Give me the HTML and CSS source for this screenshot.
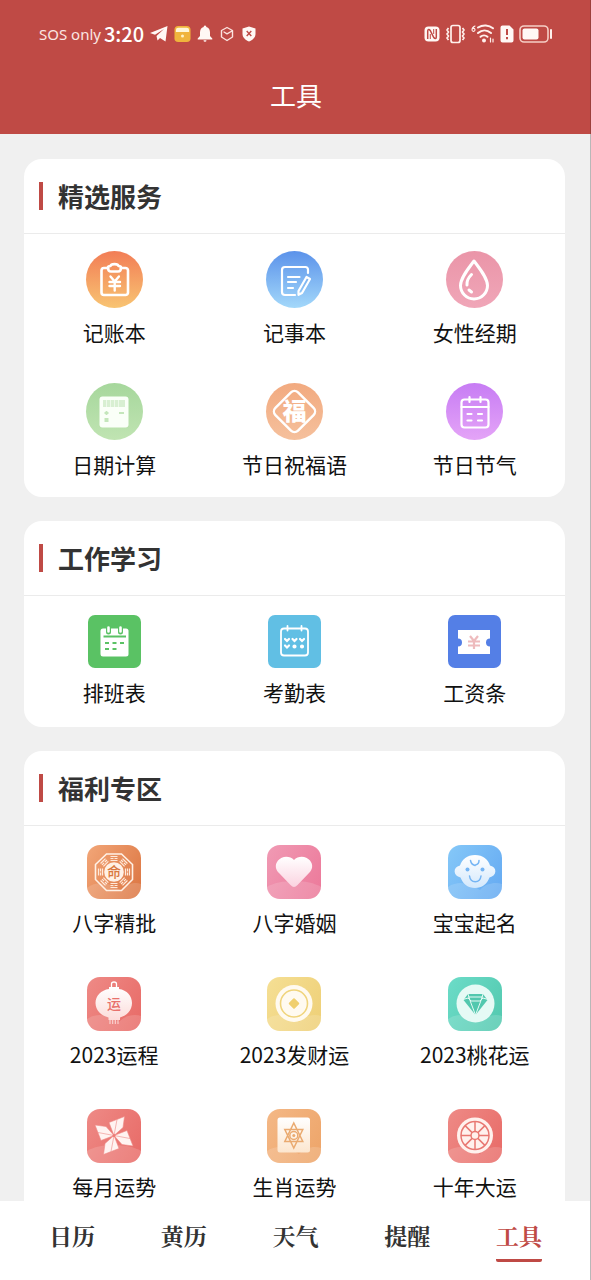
FILE: index.html
```html
<!DOCTYPE html>
<html lang="zh-CN">
<head>
<meta charset="utf-8">
<meta name="viewport" content="width=device-width, initial-scale=1">
<title>工具</title>
<link rel="stylesheet" href="styles.css">
</head>
<body>
<div class="app">
  <header class="header">
    <div class="status">
      <div class="status-left">
        <span class="carrier">SOS only</span>
        <span class="clock">3:20</span>
        <svg width="18" height="18" viewBox="0 0 18 18"><path fill="#fff8f5" d="M0 8 17.500 1 15.500 16.500 10 13 7.500 15.500 6.500 11 14 4 5 9.800Z"/></svg>
        <svg width="17" height="18" viewBox="0 0 18 18"><rect x="0.500" y="0.500" width="17" height="17" rx="4" fill="#f0b43c"/><path d="M2 7V5a2.500 2.500 0 0 1 2.500-2.500h9A2.500 2.500 0 0 1 16 5v2Z" fill="#fff6d8"/><circle cx="9" cy="11" r="1.600" fill="#fff3c8"/></svg>
        <svg width="16" height="18" viewBox="0 0 16 18"><path fill="#fff8f5" d="M8 .5a1.300 1.300 0 0 1 1.300 1.500C12 2.600 13 5 13 7.500V11l2.300 2.500v1H.7v-1L3 11V7.500C3 5 4 2.600 6.700 2A1.300 1.300 0 0 1 8 .5ZM6.500 15.300h3a1.500 1.500 0 0 1-3 0Z"/></svg>
        <svg width="17" height="16" viewBox="-1 0 17 16" fill="none" stroke="#fbe3df" stroke-width="1.400" stroke-linejoin="round" stroke-linecap="round"><path d="M7 1.500 12.500 4.500V11L7 14.500 1.500 11V4.500ZM4 6l3 1.800L12 5"/></svg>
        <svg width="14" height="16" viewBox="0 0 14 16"><path fill="#fff8f5" d="M7 .5 13.500 2.500V8c0 3.500-3 6-6.500 7.500C3.500 14 .5 11.500.5 8V2.500Z"/><path d="m4.700 5 4.600 5m0-5-4.600 5" stroke="#bf4a45" stroke-width="1.400"/></svg>
      </div>
      <div class="status-right">
        <svg width="16" height="18" viewBox="0 0 16 18"><rect x="0.500" y="1.500" width="15" height="15" rx="4" fill="#fff8f5"/><path d="M3.700 14V6c0-2 1.500-2 2.500-.5l3.600 7c1 1.500 2.500 1.500 2.500-.5V4" fill="none" stroke="#bf4a45" stroke-width="1.500"/><path d="M6.300 14V9M9.700 4v5" fill="none" stroke="#bf4a45" stroke-width="1"/></svg>
        <svg width="21" height="20" viewBox="0 0 21 20" fill="none" stroke="#fff0ec" stroke-width="1.700" stroke-linejoin="round"><rect x="6" y="1.500" width="9" height="17" rx="2"/><path d="m3.500 4-1.500 2 1.500 2L2 10l1.500 2L2 14l1.500 2M17.500 4 19 6l-1.500 2 1.500 2-1.500 2 1.500 2-1.500 2"/></svg>
        <svg width="24" height="20" viewBox="0 0 24 20" fill="none" stroke="#fff0ec" stroke-width="2" stroke-linecap="round"><path d="M7 3.500c5-3.200 11-2.600 15 .8M7 9c4-3.500 9-3.500 13 0M9.500 12.800c2-1.800 5-1.800 7 0"/><circle cx="13" cy="16.500" r="1" fill="#fff"/><path d="M19.500 14v4M22 15v3" stroke-width="1.200"/><path d="M4 2C1.500 3 1 4.500 1 6a1.500 1.500 0 1 0 .5-1.300" stroke-width="1.100"/></svg>
        <svg width="14" height="18" viewBox="0 0 14 18"><path fill="#fff8f5" d="M2.500.5h7l4 4v11a2 2 0 0 1-2 2h-9a2 2 0 0 1-2-2v-13a2 2 0 0 1 2-2Z"/><path d="M7 4v6m0 2v2.200" stroke="#bf4a45" stroke-width="2"/></svg>
        <svg width="34" height="18" viewBox="0 0 34 18"><rect x="1" y="1" width="28" height="16" rx="4" fill="none" stroke="#f6cfc6" stroke-width="1.600"/><rect x="3.500" y="3.500" width="16" height="11" rx="2" fill="#fff8f5"/><path d="M32 5v8" stroke="#fff0ec" stroke-width="2" stroke-linecap="round"/></svg>
      </div>
    </div>
    <h1 class="title">工具</h1>
  </header>

  <main class="content">
    <section class="card">
      <h2 class="card-title">精选服务</h2>
      <div class="grid">
        <a class="tool" href="#ledger">
          <span class="slot"><svg class="icon round ledger" viewBox="0 0 57 57" fill="none" stroke="#fff" stroke-width="2.600" stroke-linejoin="round" stroke-linecap="round"><path d="M22 17h-4a2.500 2.500 0 0 0-2.500 2.500v22A2.500 2.500 0 0 0 18 44h21.500a2.500 2.500 0 0 0 2.500-2.500v-22a2.500 2.500 0 0 0-2.500-2.500H35"/><path d="M22 16.500c0-1 1-1.500 2.500-1.500.5-2.500 7.500-2.500 8 0 1.500 0 2.500.5 2.500 1.500 0 2-1 4-3 4h-7c-2 0-3-2-3-4Z"/><path d="m24.500 25.500 4.200 5 4.200-5M23.500 31h10.500M23.500 35h10.500M28.700 31v8.500" stroke-width="2.400"/></svg></span>
          <span class="label">记账本</span>
        </a>
        <a class="tool" href="#notes">
          <span class="slot"><svg class="icon round notes" viewBox="0 0 57 57" fill="none" stroke="#fff" stroke-width="2.200" stroke-linejoin="round" stroke-linecap="round"><path d="M42 22v-3.500a2.500 2.500 0 0 0-2.500-2.500H19a3 3 0 0 0-3 3v22a3 3 0 0 0 3 3h10"/><path d="M22 26h11.500M22 31h8M22 37h5"/><path d="m40.500 26 3.500 2-8 14-3.500 1.800V40Z"/></svg></span>
          <span class="label">记事本</span>
        </a>
        <a class="tool" href="#period">
          <span class="slot"><svg class="icon round period" viewBox="0 0 57 57" fill="none" stroke="#fff" stroke-width="3" stroke-linejoin="round" stroke-linecap="round"><path d="M28 10C22 18 14.500 27 14.500 34.500a13.500 13.500 0 0 0 27 0C41.500 27 34 18 28 10Z"/><path d="M25.500 23.500c-3 3-5 6.500-4.500 10.500M23 39l2.500 2"/></svg></span>
          <span class="label">女性经期</span>
        </a>
        <a class="tool" href="#date">
          <span class="slot"><svg class="icon round date" viewBox="0 0 57 57"><rect x="13.500" y="13.500" width="29" height="31" rx="3" fill="#fafff8"/><path d="M17 17h22v7H17Z" fill="#d8efd2"/><path d="M20.500 17v7M24.500 17v7M28.500 17v7M32.500 17v7" stroke="#edf9ea" stroke-width="1"/><path d="M18.500 30h4m-2-2v4M33 30h5M18.500 36h4m-4 2h4" stroke="#c4e6bb" stroke-width="1.800"/></svg></span>
          <span class="label">日期计算</span>
        </a>
        <a class="tool" href="#greeting">
          <span class="slot"><svg class="icon round greeting" viewBox="0 0 57 57"><rect x="12.500" y="12.500" width="32" height="32" rx="5" transform="rotate(45 28.500 28.500)" fill="none" stroke="#fff" stroke-width="2.400"/><text class="glyph heavy" x="28.500" y="37" font-size="24" fill="#fff">福</text></svg></span>
          <span class="label">节日祝福语</span>
        </a>
        <a class="tool" href="#festival">
          <span class="slot"><svg class="icon round festival" viewBox="0 0 57 57" fill="none" stroke="#fff" stroke-width="2.200" stroke-linecap="round"><rect x="15.500" y="16.500" width="27" height="28" rx="3"/><path d="M15.500 24h27M23.500 14v5M34.500 14v5"/><path d="M21.500 31h4M32 31h4M21.500 37.500h4M32 37.500h4"/></svg></span>
          <span class="label">节日节气</span>
        </a>
      </div>
    </section>

    <section class="card compact">
      <h2 class="card-title">工作学习</h2>
      <div class="grid">
        <a class="tool" href="#shift">
          <span class="slot"><svg class="icon square shift" viewBox="0 0 53 53"><rect x="12.500" y="13.500" width="28" height="28" rx="2.500" fill="#fff"/><path d="M20.500 13v4M32.500 13v4" stroke="#5ac264" stroke-width="5" stroke-linecap="round"/><path d="M20.500 12.500v4M32.500 12.500v4" stroke="#fff" stroke-width="2.600" stroke-linecap="round"/><path d="M15.500 21.500h22.500M17 28h4m3.500 0h4m3.500 0h4M17 34h4m3.500 0h4" stroke="#5ac264" stroke-width="2"/></svg></span>
          <span class="label">排班表</span>
        </a>
        <a class="tool" href="#attendance">
          <span class="slot"><svg class="icon square attendance" viewBox="0 0 53 53" fill="none" stroke="#fff" stroke-width="1.800" stroke-linecap="round"><rect x="13" y="13.500" width="27" height="27" rx="3"/><path d="M19.500 11v4.500M33.500 11v4.500"/><path d="m17 24 2 2 2-2m3.500 0 2 2 2-2m3.500 0 2 2 2-2M17 30.500l2 2 2-2" stroke-width="2.200"/><circle cx="26.500" cy="31.500" r="1.200" fill="#fff"/><circle cx="34" cy="31.500" r="1.200" fill="#fff"/></svg></span>
          <span class="label">考勤表</span>
        </a>
        <a class="tool" href="#salary">
          <span class="slot"><svg class="icon square salary" viewBox="0 0 53 53"><path d="M10 15h32v8.500a4 4 0 0 0 0 8V39H10v-7.500a4 4 0 0 0 0-8Z" fill="#fff"/><path d="m22 21 4 5 4-5M20 26.500h12M20 30.500h12M26 26v8" fill="none" stroke="#eebbbd" stroke-width="2.200"/></svg></span>
          <span class="label">工资条</span>
        </a>
      </div>
    </section>

    <section class="card compact">
      <h2 class="card-title">福利专区</h2>
      <div class="grid">
        <a class="tool" href="#bazi">
          <span class="slot"><svg class="icon soft bazi" viewBox="0 0 54 54"><path class="hill" d="M0 43C10 35 25 38 34 46 40 38 48 37 54 39V54H0Z"/><path d="M19.500 9h15L45.500 19.500v15L34.500 45.500h-15L8.500 34.500v-15Z" fill="none" stroke="#fff1e6" stroke-width="1.600"/><circle cx="27" cy="27" r="9.800" fill="#fff1e6"/><g stroke="#ffe9da" stroke-width="1.200"><path id="trigram" d="M23.500 11.500h7M23.500 13.500h3m1 0h3M23.500 15.500h7"/><use href="#trigram" transform="rotate(45 27 27)"/><use href="#trigram" transform="rotate(90 27 27)"/><use href="#trigram" transform="rotate(135 27 27)"/><use href="#trigram" transform="rotate(180 27 27)"/><use href="#trigram" transform="rotate(225 27 27)"/><use href="#trigram" transform="rotate(270 27 27)"/><use href="#trigram" transform="rotate(315 27 27)"/></g><text class="glyph medium" x="27" y="32" font-size="14" fill="#d9783f">命</text></svg></span>
          <span class="label">八字精批</span>
        </a>
        <a class="tool" href="#marriage">
          <span class="slot"><svg class="icon soft marriage" viewBox="0 0 54 54"><defs><linearGradient id="fade-pink" x2="0" y2="1"><stop stop-color="#fff"/><stop offset="1" stop-color="#fbd3e0"/></linearGradient></defs><path class="hill" d="M0 42C12 34 42 34 54 42V54H0Z"/><path d="M27 15C31 10.500 39 10.500 43 15.500c3.500 4.500 2.500 9-1 12.500L30.500 40c-2.500 2.500-4.500 2.500-7 0L12 28C8.500 24.500 7.500 20 11 15.500c4-5 12-5 16-.5Z" fill="url(#fade-pink)"/></svg></span>
          <span class="label">八字婚姻</span>
        </a>
        <a class="tool" href="#baby">
          <span class="slot"><svg class="icon soft baby" viewBox="0 0 54 54"><defs><linearGradient id="fade-blue" x2="0" y2="1"><stop stop-color="#fff"/><stop offset="1" stop-color="#d3e8fc"/></linearGradient></defs><path class="hill" d="M0 42C12 34 24 40 32 45 38 38 48 37 54 39V54H0Z"/><path d="M27 10c8 0 13 4.500 15 10.500 7.500 1.500 7 10.500-.5 12C39 39 34 43 27 43s-12-4-14.500-10.500C5 31 4.500 22 12 20.500c2-6 7-10.500 15-10.500Z" fill="url(#fade-blue)"/><circle cx="19.500" cy="24.500" r="2" fill="#75b5f4"/><circle cx="34.500" cy="24.500" r="2" fill="#75b5f4"/><path d="M21.500 31c1 7.500 10.500 7.500 11.500 0M22.500 15.500c.5 2.500 2.500 4.500 4.500 5M27.500 20c2.500-.5 3.500-2.500 3.500-4.500" fill="none" stroke="#75b5f4" stroke-width="1.500" stroke-linecap="round"/></svg></span>
          <span class="label">宝宝起名</span>
        </a>
        <a class="tool" href="#year">
          <span class="slot"><svg class="icon soft coral" viewBox="0 0 54 54"><defs><linearGradient id="fade-coral" x2="0" y2="1"><stop stop-color="#fff"/><stop offset="1" stop-color="#fcdcda"/></linearGradient></defs><path class="hill" d="M0 42C12 34 24 40 32 45 38 38 48 37 54 39V54H0Z"/><path d="M24.500 10V7a2.500 2 0 0 1 5 0v3" fill="none" stroke="#fff" stroke-width="1.300"/><path d="M22 10h10v2c8 1 13 7 13 14s-5 12.500-12 14.500V43H21.500v-2.500C14 38.500 8.500 33 8.500 26S14 13 22 12Z" fill="url(#fade-coral)"/><path d="M23 43v4m2.700-4v4m2.600-4v4m2.700-4v4" stroke="#fcdcda" stroke-width="1"/><text class="glyph medium" x="27" y="32" font-size="14" fill="#e8716c">运</text></svg></span>
          <span class="label">2023运程</span>
        </a>
        <a class="tool" href="#wealth">
          <span class="slot"><svg class="icon soft wealth" viewBox="0 0 54 54"><path class="hill" d="M0 42C12 34 24 40 32 45 38 38 48 37 54 39V54H0Z"/><circle cx="27" cy="26.500" r="18.500" fill="#fffaf0"/><circle cx="27" cy="26.500" r="13.500" fill="none" stroke="#f0d47c" stroke-width="1.600"/><rect x="23" y="22.500" width="8" height="8" rx="1" transform="rotate(45 27 26.500)" fill="#f0cf6e"/></svg></span>
          <span class="label">2023发财运</span>
        </a>
        <a class="tool" href="#romance">
          <span class="slot"><svg class="icon soft romance" viewBox="0 0 54 54"><path class="hill" d="M0 42C12 34 24 40 32 45 38 38 48 37 54 39V54H0Z"/><circle cx="27.500" cy="26.500" r="19" fill="#e6faf5"/><path d="M20 17h15l4.500 6L27.500 38 15.500 23Z" fill="#52c8ae"/><path d="m20 17 2 6.500L27.500 38 33 23.500l2-6.500M15 22.500l5-1.500 3 3h9l3-3 5 1.500M20 20h15" fill="none" stroke="#e6faf5" stroke-width="1"/></svg></span>
          <span class="label">2023桃花运</span>
        </a>
        <a class="tool" href="#month">
          <span class="slot"><svg class="icon soft coral" viewBox="0 0 54 54"><path class="hill" d="M0 42C12 34 42 34 54 42V54H0Z"/><g fill="#fff3f1" stroke="#ee8a86" stroke-width=".6" stroke-linejoin="round"><path id="blade" d="M27 26.500 22 13.500 37.500 7.500 36 18.500ZM27 26.500 30 10.500"/><use href="#blade" transform="rotate(90 27 26.500)"/><use href="#blade" transform="rotate(180 27 26.500)"/><use href="#blade" transform="rotate(270 27 26.500)"/></g><circle cx="27" cy="26.500" r="1.500" fill="#ee7a75"/></svg></span>
          <span class="label">每月运势</span>
        </a>
        <a class="tool" href="#zodiac">
          <span class="slot"><svg class="icon soft zodiac" viewBox="0 0 54 54"><defs><linearGradient id="fade-amber" x2="0" y2="1"><stop stop-color="#fff"/><stop offset="1" stop-color="#fce6cf"/></linearGradient></defs><path class="hill" d="M0 42C12 34 24 40 32 45 38 38 48 37 54 39V54H0Z"/><rect x="10.500" y="8.500" width="32.500" height="35" rx="2.500" fill="url(#fade-amber)"/><g fill="none" stroke="#eaaa70" stroke-width="1.500"><path d="m26.800 14 9 18.500h-18ZM26.800 39l9-18.500h-18Z"/><circle cx="26.800" cy="26.500" r="4"/></g><circle cx="26.800" cy="26.500" r="1.500" fill="#eaaa70"/></svg></span>
          <span class="label">生肖运势</span>
        </a>
        <a class="tool" href="#decade">
          <span class="slot"><svg class="icon soft coral" viewBox="0 0 54 54"><path class="hill" d="M0 42C12 34 24 40 32 45 38 38 48 37 54 39V54H0Z"/><circle cx="27" cy="26.500" r="18" fill="#fff1ed"/><g fill="none" stroke="#e87872" stroke-width="1.500"><circle cx="27" cy="26.500" r="14"/><circle cx="27" cy="26.500" r="4"/><path d="M27 12.500v10m0 8v10M13 26.500h10m8 0h10M17.100 16.600l7 7m5.800 5.800 7 7M36.900 16.600l-7 7m-5.800 5.800-7 7"/></g></svg></span>
          <span class="label">十年大运</span>
        </a>
      </div>
    </section>
  </main>

  <nav class="tabs">
    <a class="tab" href="#calendar">日历</a>
    <a class="tab" href="#almanac">黄历</a>
    <a class="tab" href="#weather">天气</a>
    <a class="tab" href="#reminder">提醒</a>
    <a class="tab active" href="#tools" aria-current="page">工具</a>
  </nav>
</div>
</body>
</html>
```

FILE: styles.css
```css
* {
  box-sizing: border-box;
}

body {
  margin: 0;
  background: #f0f0f0;
  color: #111;
  font-family: "Noto Sans CJK SC", sans-serif;
}

a {
  color: inherit;
  text-decoration: none;
}

svg {
  display: block;
  flex: none;
}

.app {
  display: flex;
  flex-direction: column;
  height: 100vh;
}

.header {
  flex: none;
  padding: 20px 37px 19px 39px;
  border-right: 1px solid #9c403c;
  background: #bf4a45;
  color: #fff;
}

.status,
.status-left,
.status-right {
  display: flex;
  align-items: center;
}

.status {
  justify-content: space-between;
  height: 27px;
}

.status-left {
  gap: 6px;
}

.status-right {
  gap: 5px;
}

.carrier {
  margin-right: -3px;
  color: #fbe6e2;
  font: 15px/22px "Noto Sans", sans-serif;
}

.clock {
  font-size: 20px;
  font-weight: 500;
  line-height: 27px;
}

.title {
  margin: 28px 0 0;
  font-size: 26px;
  font-weight: 400;
  line-height: 40px;
  text-align: center;
}

.content {
  flex: 1;
  min-height: 0;
  overflow-y: auto;
  scrollbar-width: none;
  padding: 25px 25px 0 24px;
  border-right: 1px solid #b8b8b8;
}

.card {
  margin-bottom: 24px;
  border-radius: 18px;
  background: #fff;
}

.card-title {
  display: flex;
  align-items: center;
  gap: 15px;
  height: 75px;
  margin: 0 0 -1px;
  padding-left: 15px;
  border-bottom: 1px solid #ebebeb;
  color: #333;
  font-size: 26px;
  font-weight: 700;
  line-height: 38px;
}

.card-title::before {
  content: "";
  width: 4px;
  height: 28px;
  background: #bf4a45;
}

.grid {
  display: grid;
  grid-template-columns: repeat(3, 1fr);
}

.tool {
  display: flex;
  flex-direction: column;
  align-items: center;
  gap: 9px;
  height: 132px;
  padding-top: 18px;
}

.compact .tool {
  gap: 7px;
}

.slot {
  display: grid;
  place-items: center;
  height: 57px;
}

.label {
  font-size: 21px;
  line-height: 30px;
  white-space: nowrap;
}

.glyph {
  font-family: "Noto Sans CJK SC", sans-serif;
  text-anchor: middle;
}

.medium {
  font-weight: 500;
}

.heavy {
  font-weight: 900;
}

.round {
  width: 57px;
  height: 57px;
  border-radius: 50%;
}

.square {
  width: 53px;
  height: 53px;
  border-radius: 7px;
}

.soft {
  width: 54px;
  height: 54px;
  border-radius: 13px;
}

.hill {
  fill: #fff;
  opacity: 0.15;
}

.ledger { background: linear-gradient(#f27d56, #f8c472); }
.notes { background: linear-gradient(#5b92ea, #a3d8fa); }
.period { background: linear-gradient(#ea95a8, #f0a6b8); }
.date { background: linear-gradient(#a6d79c, #c0e4b2); }
.greeting { background: linear-gradient(#f2aa80, #f5c09c); }
.festival { background: linear-gradient(#c77cf4, #e4a4f7); }
.shift { background: #5ac264; }
.attendance { background: #61bfe4; }
.salary { background: #547fe6; }
.bazi { background: linear-gradient(120deg, #f2a678, #db7440); }
.marriage { background: linear-gradient(120deg, #f09ab4, #ec7899); }
.baby { background: linear-gradient(120deg, #85c8f8, #64a9f2); }
.coral { background: linear-gradient(120deg, #ee8a86, #e86a66); }
.wealth { background: linear-gradient(120deg, #f5df94, #eecf76); }
.romance { background: linear-gradient(120deg, #6cdcc8, #52c8ae); }
.zodiac { background: linear-gradient(120deg, #f4b886, #eda468); }

.tabs {
  display: grid;
  grid-template-columns: repeat(5, 1fr);
  flex: none;
  height: 79px;
  padding: 16px 15px 0 16px;
  border-right: 1px solid #b8b8b8;
  background: #fff;
}

.tab {
  justify-self: center;
  height: 45px;
  color: #333;
  font-family: "Noto Serif CJK SC", "Source Han Serif SC", "Noto Sans CJK SC", serif;
  font-size: 23px;
  font-weight: 700;
  line-height: 38px;
}

.tab.active {
  border-bottom: 3px solid #bf4a45;
  border-radius: 2px;
  color: #bf4a45;
}
```
